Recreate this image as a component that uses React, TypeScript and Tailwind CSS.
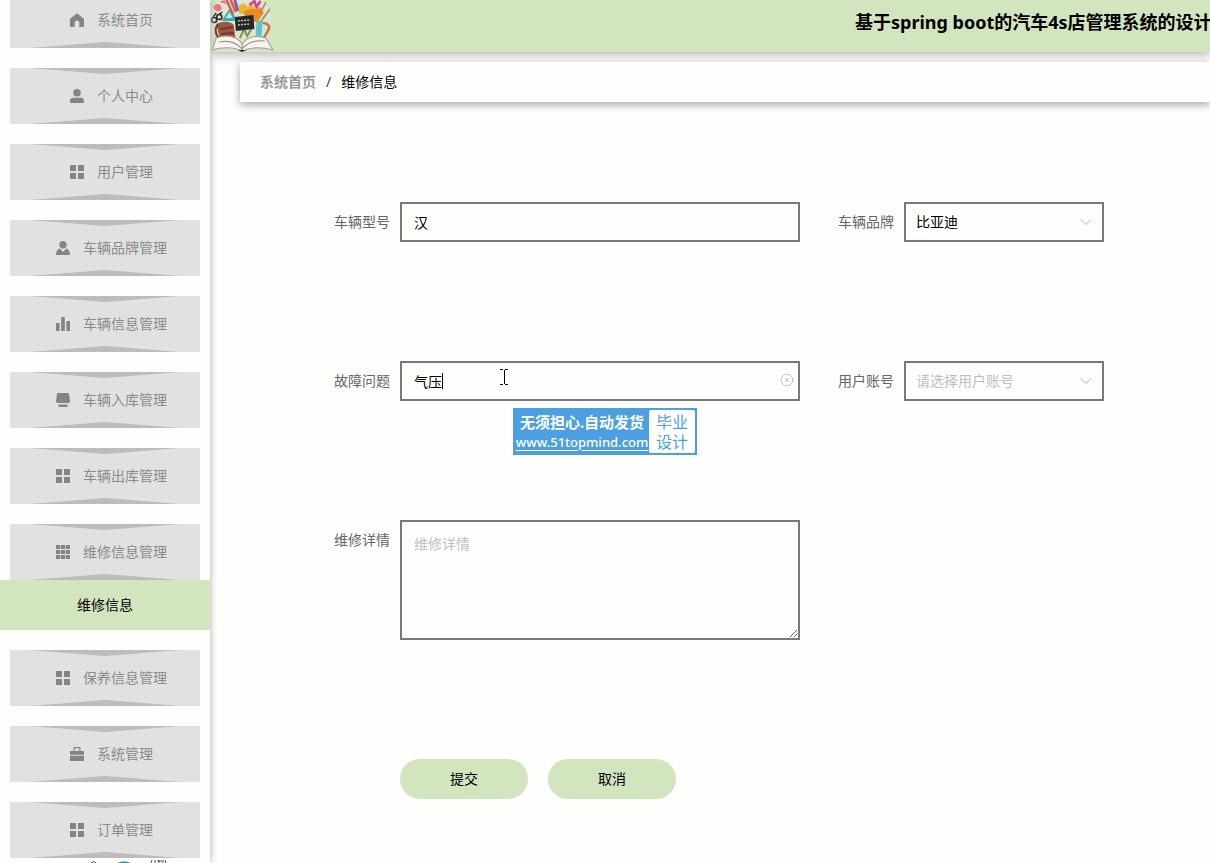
import React from 'react';
import { ChevronDown, CircleX } from 'lucide-react';

type IconName = 'home' | 'user' | 'menu' | 'custom' | 'data' | 'shop' | 'grid' | 'case';

interface MenuItem {
  label: string;
  icon: IconName;
  children?: string[];
}

const MENU: MenuItem[] = [
  { label: '系统首页', icon: 'home' },
  { label: '个人中心', icon: 'user' },
  { label: '用户管理', icon: 'menu' },
  { label: '车辆品牌管理', icon: 'custom' },
  { label: '车辆信息管理', icon: 'data' },
  { label: '车辆入库管理', icon: 'shop' },
  { label: '车辆出库管理', icon: 'menu' },
  { label: '维修信息管理', icon: 'grid', children: ['维修信息'] },
  { label: '保养信息管理', icon: 'menu' },
  { label: '系统管理', icon: 'case' },
  { label: '订单管理', icon: 'menu' },
];

const ICONS: Record<IconName, React.ReactNode> = {
  home: <path d="M7 0.3 13.6 5.6c.3.2.4.5.4.8V13c0 .6-.4 1-1 1H9.300V9.800a2.300 2.300 0 0 0-4.600 0V14H1c-.6 0-1-.4-1-1V6.400c0-.3.100-.6.400-.8z" />,
  user: (
    <>
      <circle cx="7" cy="3.800" r="3.800" />
      <path d="M3 8.800h8c1.700 0 3 1.300 3 3V13c0 .6-.4 1-1 1H1c-.6 0-1-.4-1-1v-1.200c0-1.700 1.300-3 3-3z" />
    </>
  ),
  menu: <path d="M0 0h6v6H0zM8 0h6v6H8zM0 8h6v6H0zM8 8h6v6H8z" />,
  custom: (
    <>
      <circle cx="7" cy="3.700" r="3.700" />
      <path d="M3.800 7.600 7 11l3.200-3.400C12.600 8.400 14 10.500 14 14H0c0-3.500 1.400-5.600 3.800-6.400z" />
    </>
  ),
  data: <path d="M0 6h3.600v8H0zM5.200 0h3.600v14H5.200zM10.400 4H14v10h-3.600z" />,
  shop: (
    <>
      <path d="M2 0h10c.6 0 .9.3 1 .9L14 8c0 1.200-.5 2-1.500 2h-11C.5 10 0 9.200 0 8L1 .9C1.100.3 1.400 0 2 0z" />
      <path d="M2.500 11.500h9V13c0 .6-.4 1-1 1h-7c-.6 0-1-.4-1-1z" />
    </>
  ),
  grid: <path d="M0 0h4.200v4H0zM4.900 0h4.200v4H4.900zM9.800 0H14v4H9.800zM0 5h4.200v4H0zM4.900 5h4.200v4H4.900zM9.800 5H14v4H9.800zM0 10h4.200v4H0zM4.900 10h4.200v4H4.900zM9.800 10H14v4H9.800z" />,
  case: (
    <>
      <path d="M3.500 4V1c0-.6.4-1 1-1h5c.6 0 1 .4 1 1v3H9.300V1.200H4.700V4z" />
      <path d="M1 4h12c.6 0 1 .4 1 1v2.700H0V5c0-.6.4-1 1-1zM0 8.700h14V13c0 .6-.4 1-1 1H1c-.6 0-1-.4-1-1z" />
    </>
  ),
};

const fieldClass = 'h-10 w-full border-2 border-[#797979] bg-[#fefefc] text-sm outline-none';

function MenuButton({ label, icon }: MenuItem) {
  return (
    <button
      type="button"
      className="relative mx-2.5 flex h-14 items-center justify-center gap-[13px] bg-[#e1e1e0] pl-[13px] text-sm text-[#8b8b8b]"
    >
      {/* folded paper edges */}
      <span className="absolute inset-x-5 top-0 h-1.5 bg-[#bcbcbb] [clip-path:polygon(0_0,100%_0,50%_100%)]" />
      <span className="absolute inset-x-5 bottom-0 h-1.5 bg-[#bcbcbb] [clip-path:polygon(0_100%,100%_100%,50%_0)]" />
      <svg viewBox="0 0 14 14" className="size-3.5 fill-[#848484]" aria-hidden="true">
        {ICONS[icon]}
      </svg>
      <span>{label}</span>
    </button>
  );
}

function Sidebar() {
  return (
    <nav className="relative z-10 w-[210px] shrink-0 overflow-hidden bg-[#fefefd] shadow-[1px_0_6px_#bbb]">
      <ul className="-mt-2 flex flex-col gap-5">
        {MENU.map((item) => (
          <li key={item.label} className="flex flex-col">
            <MenuButton {...item} />
            {item.children?.map((child) => (
              <a key={child} href="#" className="flex h-[50px] items-center justify-center bg-[#d2e5bf] text-sm text-black">
                {child}
              </a>
            ))}
          </li>
        ))}
      </ul>
      {/* top edge of a floating widget below the fold */}
      <svg viewBox="0 0 80 3" className="absolute bottom-0 left-[90px] h-[3px] w-20" fill="none" aria-hidden="true">
        <path d="M1 3 4 1.500 6 3" stroke="#555" />
        <path d="M28 3c2-2 10-2 12 0z" fill="#2a94c4" />
        <path d="M62 0l-1 3M65 0v3M67 1h5M69 0v3M73 0v3M75 0l1 3" stroke="#555" />
      </svg>
    </nav>
  );
}

function Logo() {
  return (
    <svg viewBox="0 0 62 52" className="h-[52px] w-16 shrink-0" preserveAspectRatio="none" aria-label="logo">
      <path d="M8 0h44l8 18-4 20H6L1 16z" fill="#dde6d0" />
      <path d="M3 8c2-6 7-4 8-1s-2 5-5 4zM9 2l5-2 2 4z" fill="#ef6f86" />
      <path d="m11 21 9-14 6 14z" fill="#35b0ad" />
      <path d="m15 18 4-6 3 6z" fill="#c9e6dc" />
      <path d="m16 0 6 14M20 0l5 12" stroke="#d8604e" strokeWidth="2.500" />
      <path d="m24 0 3 11" stroke="#8a5cae" strokeWidth="3" />
      <path d="M28 6c3-4 7-3 8 1l5-3 3 6-9 5-7-2z" fill="#eab534" />
      <path d="m38 5 5-4 2 6 4-6" stroke="#d8418c" strokeWidth="2.500" fill="none" />
      <path d="M33 12c5-5 10-1 16-5l3 6-6 9-12-1z" fill="#ef8a23" />
      <path d="m54 2-5 11M58 9 49 22" stroke="#a8896b" strokeWidth="1.500" />
      <path d="M6 24c8-4 15-2 17 1l2 16H10z" fill="#9b5743" />
      <path d="M8 25c-4 2-3 10 1 13" stroke="#6e3930" strokeWidth="2" fill="none" />
      <path d="m10 29 12-2M11 34l12-1" stroke="#71382f" strokeWidth="2" />
      <g stroke="#26282a" strokeWidth="1.500" fill="none">
        <circle cx="4" cy="20" r="2.500" />
        <circle cx="9" cy="17" r="2.500" />
        <path d="m3 17 3-4M9 14l3-2" />
      </g>
      <path d="m45 22 6-3-1 19-6 2z" fill="#5bc4cf" />
      <path d="M51 23c5 0 8 3 5 8l-5 9" stroke="#c8774d" strokeWidth="2.500" fill="none" />
      <path d="m29 38 4-9 3 7 4-7" stroke="#779a58" strokeWidth="2" fill="none" />
      <path d="m24 17 18-2 1 14-18 2z" fill="#242827" />
      <path d="m27 21 12-1M27 25l12-1" stroke="#b8c0b8" strokeWidth="1.500" strokeDasharray="2 1" />
      <path d="M6 38c10-4 20-2 25 6 6-8 14-9 23-6l7 12c-11-3-22-3-30 1-8-4-19-4-29-1z" fill="#f7f4ee" stroke="#a49c95" />
      <path d="M31 50V44M9 42c8-2 16 0 22 7M53 41c-8-1-16 1-22 8" stroke="#8b827d" fill="none" />
      <path d="M27 50h8l-4 2z" fill="#27221f" />
    </svg>
  );
}

function Field({ id, label, children }: { id: string; label: string; children: React.ReactNode }) {
  return (
    <div className="flex items-start">
      <label htmlFor={id} className="w-20 shrink-0 pr-2.5 text-right text-sm leading-10 text-[#666]">
        {label}
      </label>
      {children}
    </div>
  );
}

function SelectBox({ id, options, muted = false }: { id: string; options: string[]; muted?: boolean }) {
  return (
    <div className="relative w-[200px]">
      <select id={id} className={`${fieldClass} appearance-none px-2.5 ${muted ? 'text-[#c0c0c4]' : 'text-black'}`}>
        {options.map((o) => (
          <option key={o}>{o}</option>
        ))}
      </select>
      <ChevronDown className="pointer-events-none absolute top-2.5 right-2 size-5 text-[#c0c0c4]" strokeWidth={1.25} />
    </div>
  );
}

// floating contact badge over the form
function Badge() {
  return (
    <div className="absolute top-[47px] left-[113px] flex h-[47px] w-[184px] bg-[#4c9fe0] p-0.5">
      <div className="flex flex-1 flex-col items-center justify-center whitespace-nowrap text-white">
        <span className="text-[15px] leading-5 font-bold">无须担心.自动发货</span>
        <span className="text-[13px] leading-5 font-medium underline decoration-1 underline-offset-3">www.51topmind.com</span>
      </div>
      <div className="flex w-[46px] shrink-0 items-center justify-center rounded-xs bg-white text-center text-base leading-5 text-[#4c9fe0]">
        毕业
        <br />
        设计
      </div>
    </div>
  );
}

function RepairForm() {
  return (
    <form className="flex flex-col gap-[119px] pt-[100px] pl-[110px]" onSubmit={(e) => e.preventDefault()}>
      <div className="flex gap-6">
        <Field id="model" label="车辆型号">
          <div className="w-[400px]">
            <input id="model" defaultValue="汉" className={`${fieldClass} px-3 text-black`} />
          </div>
        </Field>
        <Field id="brand" label="车辆品牌">
          <SelectBox id="brand" options={['比亚迪']} />
        </Field>
      </div>

      <div className="flex gap-6">
        <Field id="fault" label="故障问题">
          <div className="relative w-[400px]">
            <input id="fault" defaultValue="气压" className={`${fieldClass} px-3 text-black`} />
            <span className="absolute top-3 left-[42px] h-4 w-px bg-black" />
            <svg viewBox="0 0 8 16" className="absolute top-2 left-[100px] h-4 w-2 stroke-black" fill="none" aria-hidden="true">
              <path d="M0 .5h3M5 .5h3M0 15.500h3M5 15.500h3M4.500 1v14" />
            </svg>
            <button type="button" aria-label="清空" className="absolute top-3 right-1.5">
              <CircleX className="size-3.5 text-[#b8b8bc]" strokeWidth={1.5} />
            </button>
            <Badge />
          </div>
        </Field>
        <Field id="account" label="用户账号">
          <SelectBox id="account" options={['请选择用户账号']} muted />
        </Field>
      </div>

      <Field id="detail" label="维修详情">
        <textarea
          id="detail"
          placeholder="维修详情"
          className="h-[120px] w-[400px] border-2 border-[#797979] bg-[#fefefc] px-3 py-3 text-sm leading-5 outline-none placeholder:text-[#c0c0c4]"
        />
      </Field>

      <div className="flex gap-5 pl-20">
        <button type="submit" className="h-10 w-32 rounded-full bg-[#d2e5bf] text-sm text-black">提交</button>
        <button type="button" className="h-10 w-32 rounded-full bg-[#d2e5bf] text-sm text-black">取消</button>
      </div>
    </form>
  );
}

export default function App() {
  return (
    <div className="flex h-screen overflow-hidden bg-[#fefefd] font-['Noto_Sans','Noto_Sans_CJK_SC',sans-serif]">
      <Sidebar />
      <div className="min-w-0 flex-1 overflow-hidden">
        <header className="flex h-[52px] bg-[#d2e5bf] shadow-[0_2px_10px_#aaa]">
          <Logo />
          <h1 className="ml-[581px] shrink-0 text-lg leading-11 font-bold whitespace-nowrap text-black">
            基于spring boot的汽车4s店管理系统的设计
          </h1>
        </header>
        <main className="pt-2.5">
          <div className="relative ml-[30px] flex h-10 items-center gap-2.5 bg-[#fefefd] pl-5 text-sm shadow-[0_3px_8px_#aaa]">
            <a href="#" className="font-bold text-[#999]">系统首页</a>
            <span className="text-[#444]">/</span>
            <span className="text-black">维修信息</span>
          </div>
          <RepairForm />
        </main>
      </div>
    </div>
  );
}
